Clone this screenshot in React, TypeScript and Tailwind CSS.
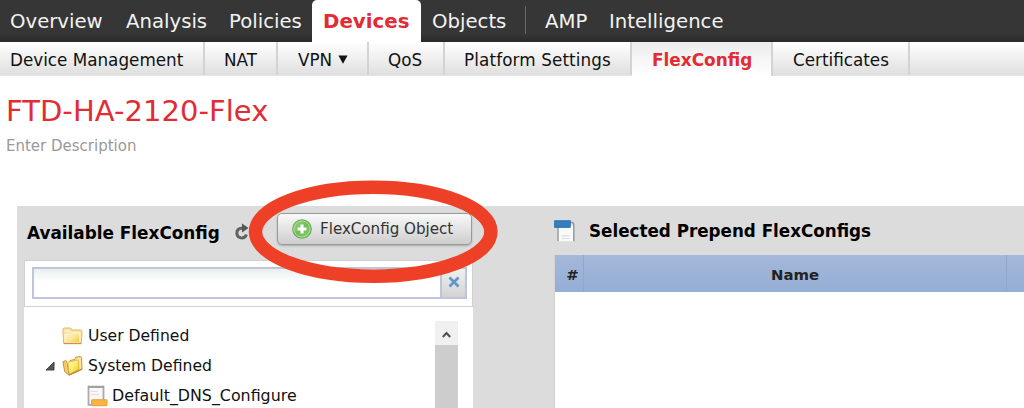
import type { ReactNode } from "react";

function NavItem({ label, className }: { label: string; className: string }) {
  return <a className={`shrink-0 text-[19.7px] leading-[43px] text-[#f2f2f2] ${className}`}>{label}</a>;
}

function SubItem({ children, className }: { children: ReactNode; className: string }) {
  return (
    <a className={`h-full shrink-0 border-r-2 border-[#d3d3d3] text-[16.8px] leading-[36px] text-[#111] ${className}`}>
      {children}
    </a>
  );
}

function RefreshIcon() {
  return (
    <svg className="ml-[13px] h-[18px] w-[18px] shrink-0" viewBox="0 0 18 18" fill="none">
      <path d="M10 5.2H8a4.9 4.9 0 1 0 5.4 6.4" stroke="#626262" strokeWidth="3" />
      <path d="M9 .5l6.6 4.6L9 9.6z" fill="#555" />
    </svg>
  );
}

function AddIcon() {
  return (
    <svg className="h-5 w-5 shrink-0" viewBox="0 0 20 20">
      <defs>
        <linearGradient id="green" x1="0" y1="0" x2="1" y2="1">
          <stop offset="0" stopColor="#a5d98c" />
          <stop offset="0.5" stopColor="#6dbd52" />
          <stop offset="1" stopColor="#8fce76" />
        </linearGradient>
      </defs>
      <circle cx="10" cy="10" r="9.3" fill="url(#green)" stroke="#71a863" strokeWidth="1.1" />
      <circle cx="10" cy="10" r="8" fill="none" stroke="#b1dea0" strokeWidth="0.9" />
      <path d="M8.4 5.6h3.2v2.9h2.9v3h-2.9v2.9H8.4v-2.9H5.5v-3h2.9z" fill="#fff" />
    </svg>
  );
}

function FolderIcon() {
  return (
    <svg className="h-[18px] w-[21px] shrink-0" viewBox="0 0 21 18">
      <defs>
        <linearGradient id="folder" x1="0" y1="0" x2="1" y2="1">
          <stop offset="0" stopColor="#fff4c9" />
          <stop offset="0.55" stopColor="#fae696" />
          <stop offset="1" stopColor="#edc62b" />
        </linearGradient>
      </defs>
      <path d="M1.6 16.2L.9 3.2Q.8 1 2.6 1H8q1.5 0 1.8 2h8.6q1.7 0 1.6 1.5l-.7 11.7z" fill="#fbe3aa" stroke="#e5b765" strokeWidth="1" />
      <path d="M3 7.4h5.2L10 5.8h7.8v9.6H3z" fill="url(#folder)" stroke="#fff7da" strokeWidth="0.9" />
      <path d="M3.3 4h4.2" stroke="#fffbe9" strokeWidth="1.2" />
      <path d="M1.8 16.5h17.5" stroke="#d98f37" strokeWidth="1.3" />
    </svg>
  );
}

function OpenFolderIcon() {
  return (
    <svg className="h-[20px] w-[21px] shrink-0" viewBox="0 0 21 20">
      <defs>
        <linearGradient id="open" x1="0" y1="0" x2="1" y2="1">
          <stop offset="0" stopColor="#fff9ad" />
          <stop offset="0.5" stopColor="#fcec6c" />
          <stop offset="1" stopColor="#e9bd19" />
        </linearGradient>
      </defs>
      <path d="M8 4.5l4.7-1L13.6 1.2 18.6.6q1 0 1 1.2l.4 11.6L7 19z" fill="#f8e3a0" stroke="#c79535" strokeWidth="1" />
      <path d="M.9 5.8L3.4 4.6q1.4 0 1.8 2.2L7 19l-4.2-3.2z" fill="#f2cd6c" stroke="#c99536" strokeWidth="1" />
      <path d="M5.8 7.2q0-1 1.2-1.3l8.2-2q1.2-.2 1.2 1L17 13 7.4 18.4z" fill="url(#open)" stroke="#dcb440" strokeWidth="0.9" />
      <path d="M6.8 19.2l9.7-4.5 3.5-1.6" stroke="#b98527" strokeWidth="1.1" fill="none" />
    </svg>
  );
}

function ObjectIcon() {
  return (
    <svg className="h-[22px] w-[21px] shrink-0" viewBox="0 0 21 22">
      <path d="M1.5 2h15v17.8h-15z" fill="#f8f8f8" stroke="#aaa" strokeWidth="1.8" />
      <path d="M1 1.6h16" stroke="#999" strokeWidth="1.6" strokeDasharray="2.6 .8" />
      <path d="M4 6.5h7M4 9.5h8" stroke="#ddd" strokeWidth="1.2" />
      <rect x="4.5" y="14.7" width="15.5" height="6" rx=".8" fill="#f9b443" stroke="#e8a036" />
    </svg>
  );
}

function PrependIcon() {
  return (
    <svg className="h-[22px] w-[22px] shrink-0" viewBox="0 0 22 22">
      <path d="M3.5 21.3V5H17l3 2v14.3z" fill="#f9f9f9" />
      <path d="M4 7v14.2M16 2.4h2.2q1.6.2 1.6 2v16.8" fill="none" stroke="#999" strokeWidth="1.5" />
      <path d="M7.5 15.8h8M7.5 18.5h8" stroke="#ddd" strokeWidth="1.2" />
      <rect x=".7" y=".8" width="15.5" height="6.5" fill="#3480bf" stroke="#266dab" />
    </svg>
  );
}

function AvailablePanel() {
  return (
    <section className="flex w-[457px] shrink-0 flex-col pl-[7px]">
      <div className="flex h-[54px] shrink-0 items-start pl-[3px] pt-[7px]">
        <h2 className="mt-[10px] w-[193px] shrink-0 whitespace-nowrap text-[16.85px] font-bold leading-5 text-black">
          Available FlexConfig
        </h2>
        <div className="mt-[10px]">
          <RefreshIcon />
        </div>
        <button className="ml-[26px] flex h-8 w-[195px] shrink-0 items-center rounded-[5px] border-[1.5px] border-[#999] bg-linear-to-b from-[#f9f9f9] to-[#cecece] pl-[14px] text-[15.1px] text-[#333] shadow-[0_1px_2px_#aaa]">
          <AddIcon />
          <span className="ml-2 mt-px whitespace-nowrap">FlexConfig Object</span>
        </button>
      </div>
      <div className="h-[47px] w-[449px] shrink-0 border border-[#d0d0d0] bg-white px-[7px] py-[6px]">
        <div className="flex h-[32px] w-[435px] border-2 border-[#c0c4d8]">
          <div className="flex-1 bg-linear-to-b from-[#e9edef] to-white to-45%" />
          <div className="flex w-[25px] items-center justify-center border-l-2 border-[#c0c4d8] bg-linear-to-b from-[#f0f0f0] to-[#d3d3d3]">
            <svg className="mb-[3px] h-3 w-3" viewBox="0 0 12 12">
              <path d="M1.5 1.5l9 9m0-9l-9 9" stroke="#6097cb" strokeWidth="2.8" />
            </svg>
          </div>
        </div>
      </div>
      <div className="flex w-[449px] flex-1 bg-white">
        <div className="flex w-[411px] shrink-0 flex-col pt-[14px] text-[15.6px] text-[#111]">
          <div className="flex h-[30px] items-center pl-[38px]">
            <FolderIcon />
            <span className="ml-[5px] whitespace-nowrap pt-px">User Defined</span>
          </div>
          <div className="flex h-[30px] items-center pl-[21px]">
            <svg className="mr-[7px] h-[10px] w-[10px] shrink-0" viewBox="0 0 10 10">
              <path d="M9 1v8H1z" fill="#555" stroke="#444" />
            </svg>
            <OpenFolderIcon />
            <span className="ml-[5px] whitespace-nowrap pt-px">System Defined</span>
          </div>
          <div className="flex h-[29px] items-center pl-[63px]">
            <ObjectIcon />
            <span className="ml-[4px] whitespace-nowrap text-[15.85px]">Default_DNS_Configure</span>
          </div>
        </div>
        <div className="mt-[14px] flex w-[23px] flex-col bg-[#cdcdcd]">
          <div className="flex h-6 items-center justify-center bg-[#f0f0f0]">
            <svg className="mt-[2px] h-[7px] w-[9px]" viewBox="0 0 9 7" fill="none">
              <path d="M.8 6l3.7-4 3.7 4" stroke="#505050" strokeWidth="2" />
            </svg>
          </div>
        </div>
      </div>
    </section>
  );
}

function SelectedPanel() {
  return (
    <section className="flex flex-1 flex-col pl-[80px]">
      <div className="flex h-[49px] shrink-0 items-center">
        <PrependIcon />
        <h2 className="ml-[13px] whitespace-nowrap text-[16.75px] font-bold leading-5 text-black">
          Selected Prepend FlexConfigs
        </h2>
      </div>
      <div className="flex h-[37px] shrink-0 border-l border-[#d2d2d2] bg-linear-to-b from-[#a3b8da] to-[#95aed5] text-center text-[14.9px] font-bold leading-[40px] text-[#222]">
        <div className="w-[29px] shrink-0 border-r border-[#8fa8cd] pl-[7px]">#</div>
        <div className="w-[423px] shrink-0 border-r border-[#8fa8cd]">Name</div>
      </div>
      <div className="flex-1 border-l border-[#d2d2d2] bg-white" />
    </section>
  );
}

export default function App() {
  return (
    <div className="relative flex h-[408px] w-[1024px] flex-col overflow-hidden bg-white font-['DejaVu_Sans',sans-serif]">
      <nav className="flex h-[42px] shrink-0 bg-linear-to-b from-[#363636] from-80% to-[#292929] pl-[10px]">
        <NavItem label="Overview" className="w-[115px]" />
        <NavItem label="Analysis" className="w-[103px] pl-px" />
        <NavItem label="Policies" className="w-[84px] pl-px" />
        <a className="w-[109px] shrink-0 rounded-t-[5px] bg-white pl-[11px] text-[19.8px] font-bold leading-[43px] text-[#e22c33]">
          Devices
        </a>
        <NavItem label="Objects" className="w-[104px] pl-[11px]" />
        <div className="mt-[6px] h-[28px] w-px bg-[#6b6b6b]" />
        <NavItem label="AMP" className="w-[83px] pl-[19px]" />
        <NavItem label="Intelligence" className="" />
      </nav>
      <div className="flex h-[34px] shrink-0 border-b border-[#e5e5e5] bg-linear-to-b from-white to-[#dfdfdf]">
        <SubItem className="w-[205px] pl-[10px]">Device Management</SubItem>
        <SubItem className="w-[73px] pl-[19px]">NAT</SubItem>
        <SubItem className="flex w-[91px] pl-[20px]">
          VPN
          <svg className="ml-[6px] mt-[13px] h-[9px] w-[10px]" viewBox="0 0 10 9">
            <path d="M.4.5h9.2L5 8.7z" fill="#111" />
          </svg>
        </SubItem>
        <SubItem className="w-[76px] pl-[19px]">QoS</SubItem>
        <SubItem className="w-[187px] pl-[19px] tracking-[0.12px]">Platform Settings</SubItem>
        <a className="h-[34px] w-[141px] shrink-0 border-r-2 border-[#d3d3d3] bg-linear-to-b from-[#ececec] to-white pl-[20px] text-[16.9px] font-bold leading-[36px] text-[#e22c33]">
          FlexConfig
        </a>
        <SubItem className="w-[137px] pl-[20px]">Certificates</SubItem>
      </div>
      <header className="h-[130px] shrink-0 pl-[6px] pt-[17px]">
        <h1 className="text-[29px] leading-9 tracking-[0.05px] text-[#e22c33]">FTD-HA-2120-Flex</h1>
        <p className="mt-[7px] text-[15px] leading-5 text-[#999]">Enter Description</p>
      </header>
      <main className="ml-[17px] flex flex-1 bg-[#dcdcdc]">
        <AvailablePanel />
        <SelectedPanel />
      </main>
      <svg className="pointer-events-none absolute left-[246px] top-[178px] h-[108px] w-[254px]" viewBox="0 0 254 108">
        <ellipse cx="127.2" cy="53.7" rx="117.7" ry="44.5" fill="none" stroke="#ed4026" strokeWidth="13.5" />
      </svg>
    </div>
  );
}
